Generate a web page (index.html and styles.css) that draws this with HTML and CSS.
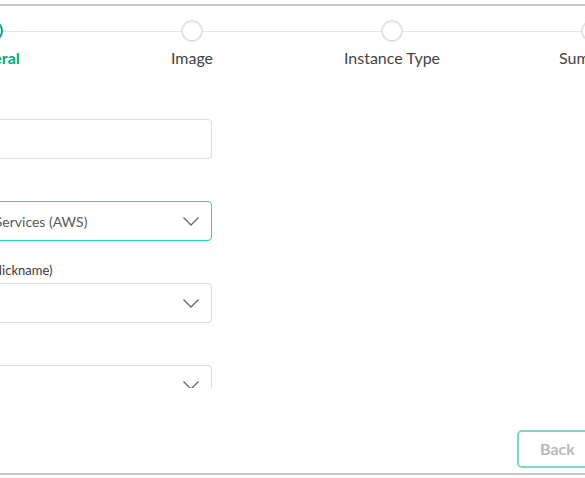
FILE: index.html
```html
<!DOCTYPE html>
<html lang="en">
<head>
<meta charset="utf-8">
<title>Create Instance</title>
<link rel="stylesheet" href="styles.css">
</head>
<body>
<div class="frame">
  <div class="stepper">
    <div class="step active">
      <div class="track"><span class="line"></span><span class="dot"></span><span class="line"></span></div>
      <div class="step-label">General</div>
    </div>
    <div class="step">
      <div class="track"><span class="line"></span><span class="dot"></span><span class="line"></span></div>
      <div class="step-label">Image</div>
    </div>
    <div class="step">
      <div class="track"><span class="line"></span><span class="dot"></span><span class="line"></span></div>
      <div class="step-label">Instance Type</div>
    </div>
    <div class="step">
      <div class="track"><span class="line"></span><span class="dot"></span><span class="line"></span></div>
      <div class="step-label">Summary</div>
    </div>
  </div>

  <div class="form-area">
    <div class="form">
      <div class="field">
        <label class="field-label">Name</label>
        <div class="input"></div>
      </div>
      <div class="field">
        <label class="field-label">Provider</label>
        <div class="input select focused">
          <span class="value">Amazon Web Services (AWS)</span>
          <svg class="chev" width="16" height="9" viewBox="0 0 16 9"><path d="M0.5 0.5 L8 8 L15.5 0.5" fill="none" stroke="#666" stroke-width="1.3"/></svg>
        </div>
      </div>
      <div class="field">
        <label class="field-label">Cloud Accounts (Nickname)</label>
        <div class="input select">
          <span class="value"></span>
          <svg class="chev" width="16" height="9" viewBox="0 0 16 9"><path d="M0.5 0.5 L8 8 L15.5 0.5" fill="none" stroke="#666" stroke-width="1.3"/></svg>
        </div>
      </div>
      <div class="field">
        <label class="field-label">Region</label>
        <div class="input select">
          <span class="value"></span>
          <svg class="chev" width="16" height="9" viewBox="0 0 16 9"><path d="M0.5 0.5 L8 8 L15.5 0.5" fill="none" stroke="#666" stroke-width="1.3"/></svg>
        </div>
      </div>
    </div>
  </div>

  <div class="footer">
    <button class="btn btn-back">Back</button>
    <button class="btn btn-next">Next</button>
  </div>
</div>
</body>
</html>
```

FILE: styles.css
```css
html, body {
  margin: 0;
  padding: 0;
  overflow: hidden;
  background: #ffffff;
  font-family: Lato, "Noto Sans", "Liberation Sans", sans-serif;
}

.frame {
  margin-top: 4px;
  height: 467px;
  border-top: 2px solid #c6c6c6;
  border-bottom: 2px solid #c6c6c6;
  display: flex;
  flex-direction: column;
}

.stepper {
  display: flex;
  margin-left: -108px;
  padding-top: 14px;
}

.step {
  width: 200px;
  flex: none;
  display: flex;
  flex-direction: column;
  align-items: center;
}

.track {
  display: flex;
  align-items: center;
  width: 100%;
  height: 22px;
}

.line {
  flex: 1;
  height: 1px;
  background: #e4e4e4;
}

.dot {
  width: 18px;
  height: 18px;
  border: 2px solid #e2e4e6;
  border-radius: 50%;
  background: #fff;
  flex: none;
}

.step.active .dot {
  border-color: #01a982;
}

.step-label {
  margin-top: 6px;
  font-size: 16px;
  line-height: 19px;
  color: #444;
  white-space: nowrap;
}

.step.active .step-label {
  color: #01a982;
  font-weight: 700;
}

.form-area {
  margin-top: 31px;
  height: 290px;
  overflow: hidden;
}

.form {
  width: 316px;
  margin-left: -104px;
  display: flex;
  flex-direction: column;
  gap: 21px;
}

.field {
  display: flex;
  flex-direction: column;
  gap: 5px;
}

.field-label {
  font-size: 13px;
  line-height: 16px;
  color: #3a3a3a;
  white-space: nowrap;
}

.input {
  box-sizing: border-box;
  height: 40px;
  border: 1px solid #dcdcdc;
  border-radius: 4px;
  display: flex;
  align-items: center;
  padding: 0 12px 0 12px;
}

.input.focused {
  border-color: #27d0c6;
}

.select .value {
  flex: 1;
  font-size: 14px;
  color: #5a5a5a;
  white-space: nowrap;
}

.chev {
  flex: none;
  margin-top: 1px;
}

.footer {
  margin-top: 42px;
  display: flex;
  gap: 12px;
  padding-left: 517px;
}

.btn {
  box-sizing: border-box;
  height: 38px;
  flex: none;
  width: 112px;
  border: 2px solid #7fd7c3;
  border-radius: 5px;
  background: #fff;
  font-family: inherit;
  font-size: 16px;
  font-weight: 700;
  color: #b9b9b9;
  text-align: left;
  padding: 0 0 2px 21px;
}
```
